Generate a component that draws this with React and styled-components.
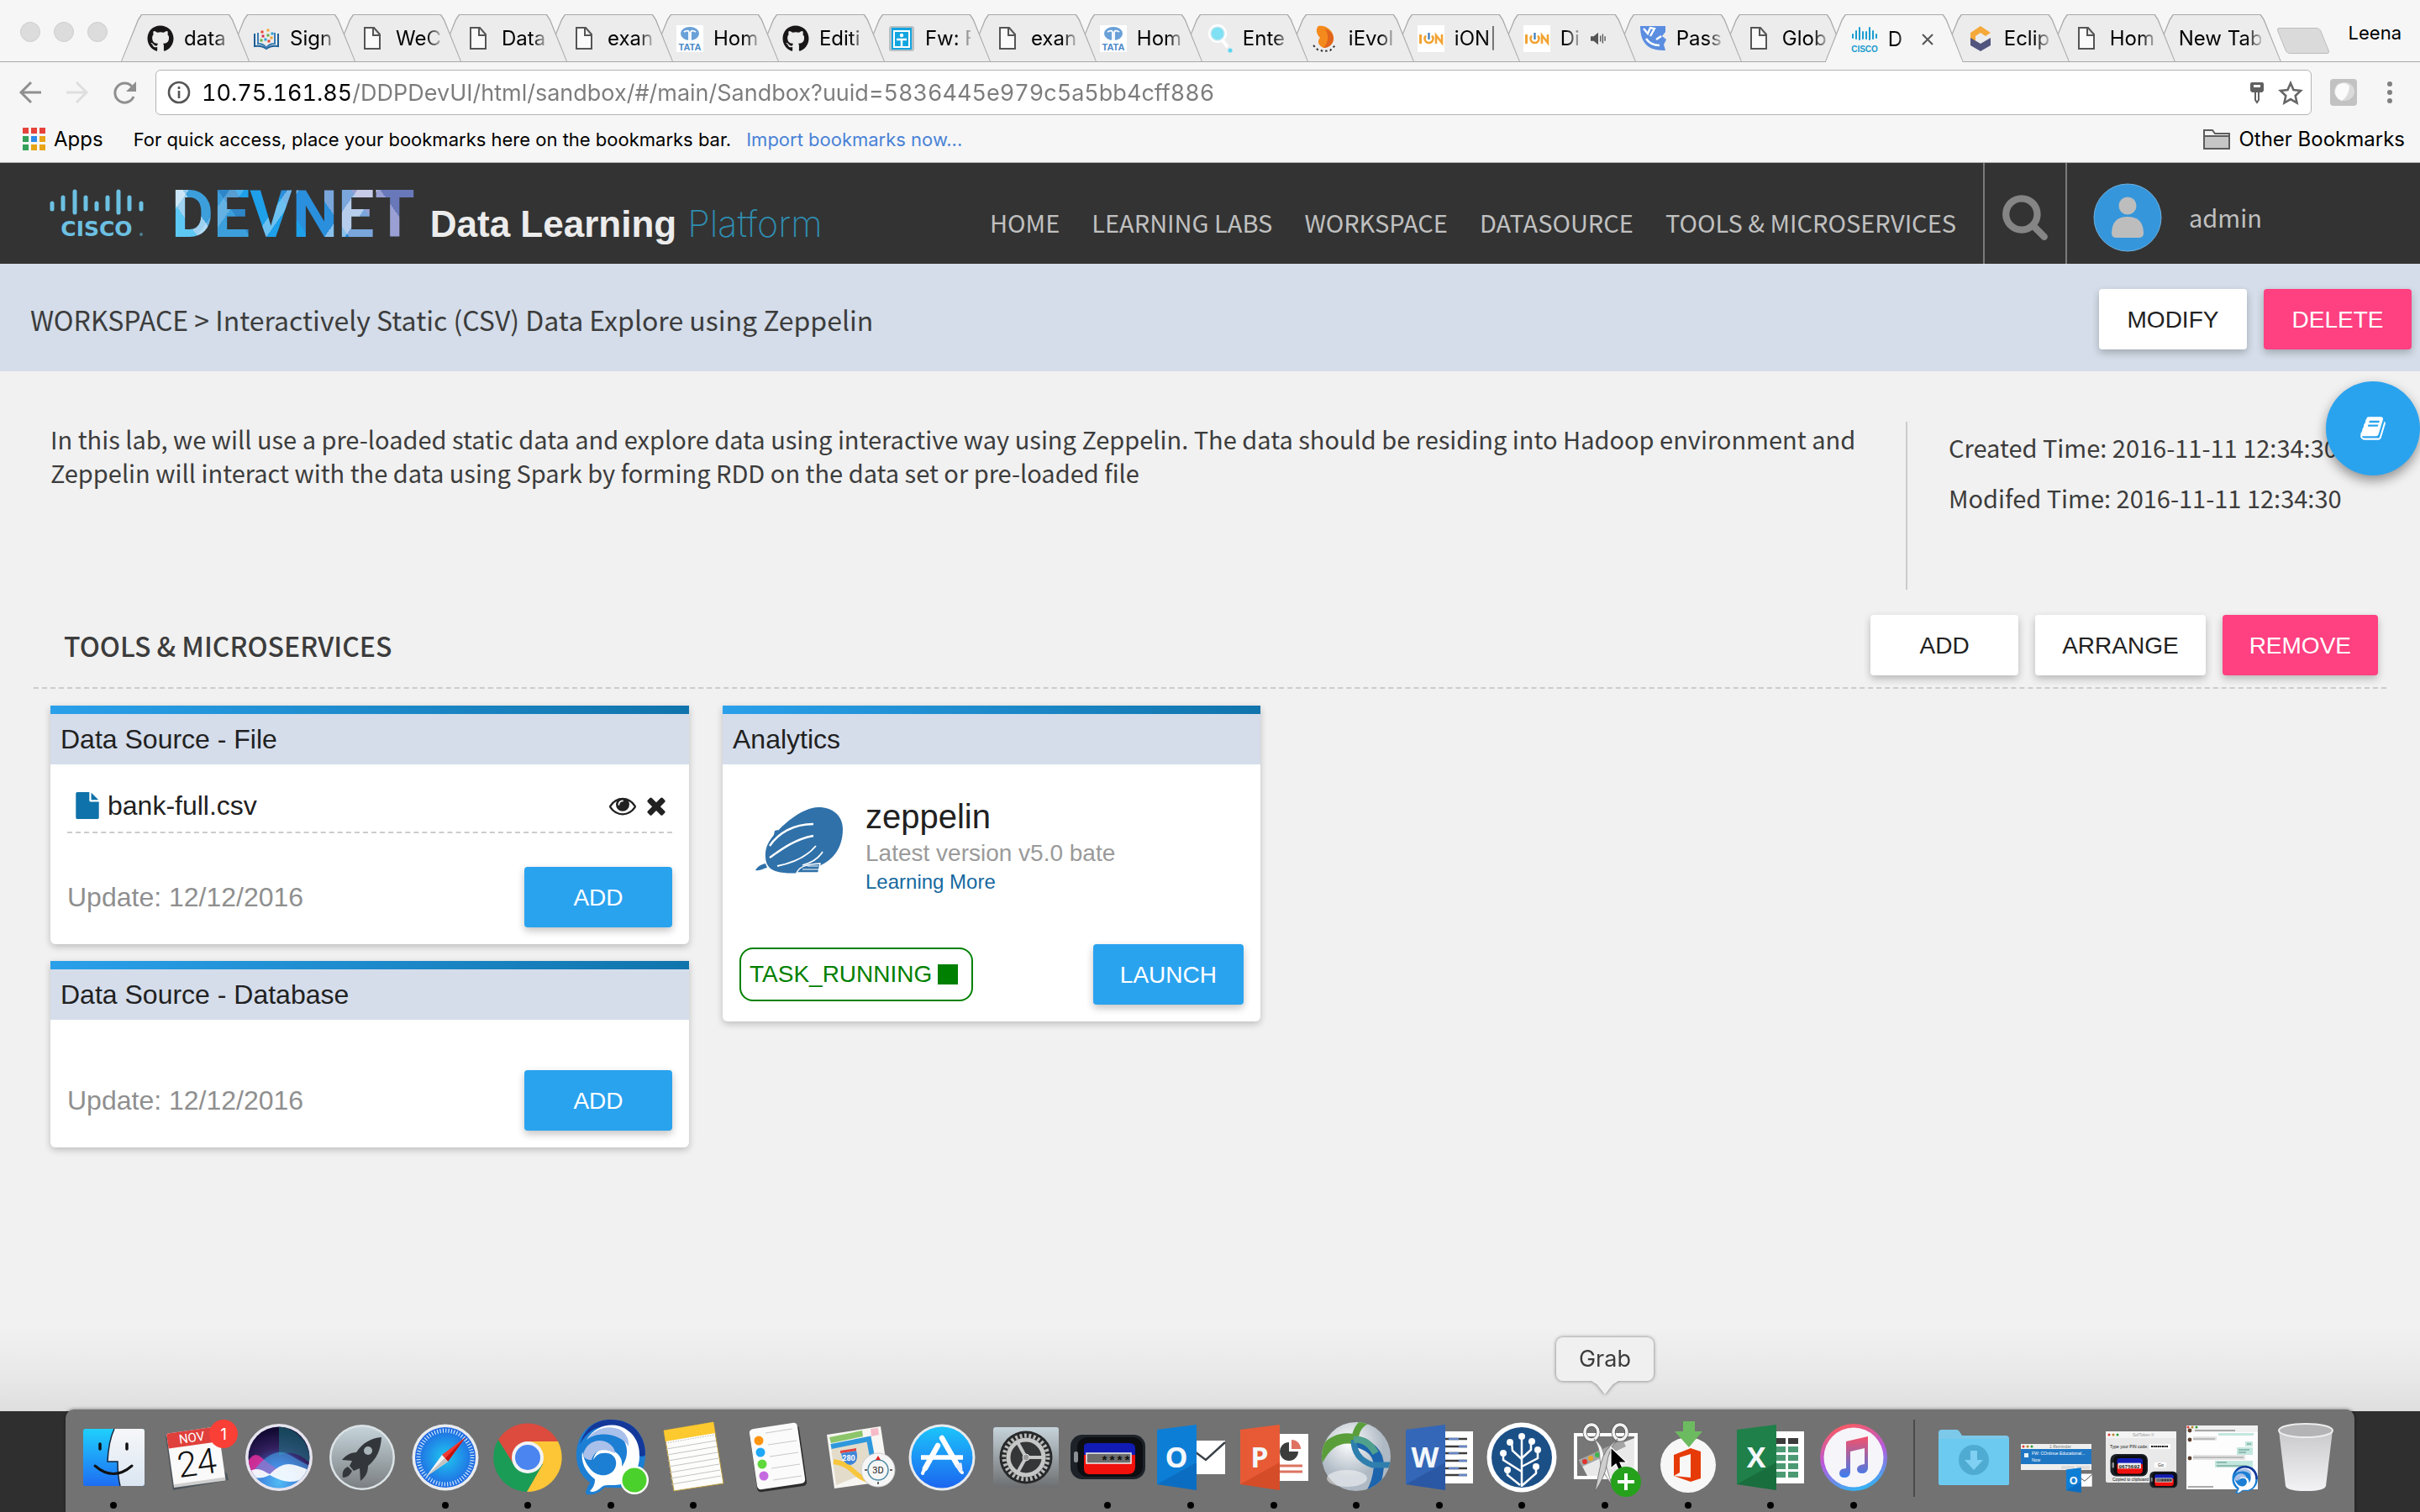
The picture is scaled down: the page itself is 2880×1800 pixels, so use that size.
import React from 'react';
import styled, { createGlobalStyle, css } from 'styled-components';
import { FaGithub } from 'react-icons/fa';

const SYSTEM = '"Inter", "Roboto", sans-serif';
const SOURCE = '"Noto Sans CJK SC", "Noto Sans", sans-serif';
const HELV = '"Liberation Sans", Arial, sans-serif';

const GlobalStyle = createGlobalStyle`
  *, *::before, *::after { box-sizing: border-box; }
  body { margin: 0; background: #2f2f2f; }
  button, input { font: inherit; margin: 0; padding: 0; border: 0; background: none; }
  button { cursor: pointer; color: inherit; }
  a { color: inherit; text-decoration: none; }
  h1, h2, h3, p, ul { margin: 0; padding: 0; font-weight: 400; list-style: none; }
  svg { display: block; flex: none; overflow: visible; }
`;

/* ---------- browser window ---------- */

const Screen = styled.div`
  min-height: 100vh;
  display: flex;
  flex-direction: column;
`;

const Chrome = styled.header`
  background: #f6f6f6;
  border-bottom: 1px solid #b0b0b0;
  font-family: ${SYSTEM};
  color: #000;
`;

const TabBar = styled.div`
  display: flex;
  height: 74px;
  padding: 17px 22px 0 24px;
  border-bottom: 1px solid #a9a9a9;
`;

const Lights = styled.div`
  display: flex;
  gap: 16px;
  width: 120px;
  padding-top: 9px;
`;

const Light = styled.button`
  width: 24px;
  height: 24px;
  border-radius: 50%;
  background: #dcdcdc;
  border: 1px solid #cecece;
`;

const Tabs = styled.nav`
  display: flex;
  flex: 1;
  min-width: 0;
`;

const tabShape = 'polygon(24px 0, calc(100% - 24px) 0, calc(100% - 20px) 6px, 100% 100%, 0 100%, 20px 6px)';

const Tab = styled.button`
  position: relative;
  z-index: ${p => (p.$active ? 40 : 30 - p.$index)};
  flex: 1 1 0;
  min-width: 0;
  display: flex;
  align-items: center;
  gap: 12px;
  padding: 2px ${p => (p.$trail ? '36px' : '24px')} 0 31px;
  margin-right: -27px;
  margin-bottom: ${p => (p.$active ? '-1px' : '0')};
  font-size: 24px;
  line-height: 32px;
  text-align: left;
  &:last-child { margin-right: 0; }
  &::before, &::after {
    content: '';
    position: absolute;
    inset: 0;
    z-index: -1;
    background: #a9a9a9;
    clip-path: ${tabShape};
  }
  &::after {
    inset: 1px 1px 0;
    background: ${p => (p.$active ? '#f6f6f6' : '#ececec')};
  }
`;

const TabTitle = styled.span`
  flex: 1;
  min-width: 0;
  overflow: hidden;
  white-space: nowrap;
  mask-image: linear-gradient(to right, #000 calc(100% - 18px), rgba(0, 0, 0, .2));
`;

const NewTab = styled.button`
  width: 52px;
  height: 31px;
  margin: 16px 28px 0 0;
  background: #dadada;
  border: 1px solid #bcbcbc;
  border-radius: 4px;
  transform: skewX(22deg);
`;

const Profile = styled.button`
  align-self: flex-start;
  padding-top: 6px;
  font-size: 22px;
  line-height: 32px;
`;

const Toolbar = styled.div`
  display: flex;
  align-items: center;
  gap: 22px;
  height: 72px;
  padding: 0 31px 0 22px;
`;

const NavIcons = styled.div`
  display: flex;
  gap: 28px;
  width: 141px;
`;

const Address = styled.label`
  flex: 1;
  display: flex;
  align-items: center;
  height: 54px;
  padding: 0 9px 0 13px;
  gap: 13px;
  background: #fff;
  border: 1px solid #b4b4b4;
  border-radius: 6px;
`;

const Url = styled.input`
  flex: 1;
  min-width: 0;
  height: 50px;
  outline: 0;
  font-size: 27px;
  font-variant-numeric: tabular-nums;
  color: transparent;
  background: linear-gradient(to right, #000 176px, #7c7c7c 176px);
  background-clip: text;
`;

const AddressIcons = styled.span`
  display: flex;
  align-items: center;
  gap: 16px;
`;

const ToolIcons = styled.div`
  display: flex;
  align-items: center;
  gap: 34px;
`;

const Bookmarks = styled.div`
  display: flex;
  align-items: center;
  height: 47px;
  padding: 0 18px 8px 27px;
  font-size: 22px;
  line-height: 28px;
`;

const Bookmark = styled.a`
  display: flex;
  align-items: center;
  gap: 10px;
  font-size: 24px;
  margin-left: ${p => (p.$end ? 'auto' : '0')};
`;

const BookmarkHint = styled.p`
  margin-left: 36px;
  a { margin-left: 18px; color: #4a82d6; }
`;

/* ---------- application header ---------- */

const AppHeader = styled.header`
  display: flex;
  height: 120px;
  background: #333;
  color: #c0c0c0;
  font-family: ${SOURCE};
  font-size: 29px;
  line-height: 40px;
`;

const Brand = styled.a`
  display: flex;
  align-items: baseline;
  padding: 22px 0 0 60px;
  white-space: nowrap;
  line-height: 80px;
`;

const DevNet = styled.span`
  margin: 0 18px 0 32px;
  font-family: Roboto, sans-serif;
  font-weight: 700;
  font-size: 77px;
  color: transparent;
  background:
    linear-gradient(125deg, rgba(255,255,255,.45) 0 8%, transparent 8% 22%, rgba(255,255,255,.2) 22% 27%, transparent 27% 42%, rgba(255,255,255,.35) 42% 46%, transparent 46% 66%, rgba(255,255,255,.45) 66% 73%, transparent 73%),
    linear-gradient(55deg, #5ec8f5 0 12%, #9fd2f0 12% 18%, #3c9fdc 18% 30%, #2e86c8 30% 36%, #1ea0ea 36% 50%, #2a8fdc 50% 64%, #7aa6dc 64% 76%, #9aa0d4 76% 86%, #6878b8 86%);
  background-clip: text;
`;

const BrandName = styled.span`
  font-family: ${HELV};
  font-weight: 700;
  font-size: 44px;
  color: #ececec;
`;

const BrandThin = styled.span`
  margin-left: 13px;
  font-family: Inter, sans-serif;
  font-weight: 200;
  font-size: 43px;
  color: #2f8db0;
`;

const MainNav = styled.nav`
  display: flex;
  gap: 38px;
  margin-left: auto;
  padding: 50px 32px 0 0;
`;

const SearchButton = styled.button`
  width: 100px;
  display: flex;
  justify-content: center;
  padding-top: 34px;
  border: solid #7b7b7b;
  border-width: 0 2px;
  color: #858585;
`;

const User = styled.a`
  display: flex;
  gap: 32px;
  width: 420px;
  padding: 24px 0 0 31px;
  span { padding-top: 20px; }
`;

/* ---------- workspace page ---------- */

const Main = styled.main`
  flex: 1;
  background: linear-gradient(to top, #dedede, #e8e8e8 40px, #f1f1f1 100px);
  color: #3c3c3c;
  font-family: ${SOURCE};
`;

const TitleBar = styled.div`
  display: flex;
  align-items: center;
  justify-content: space-between;
  padding: 30px 10px 26px 36px;
  background: #d4dde9;
  h1 { font-size: 32px; line-height: 44px; }
`;

const Actions = styled.div`
  display: flex;
  gap: 20px;
`;

const tones = {
  plain: css`background: #fff; color: #212121;`,
  pink: css`background: #ff4081; color: #fff;`,
  blue: css`background: #2aa3ef; color: #fff;`,
};

const Button = styled.button`
  min-width: 176px;
  height: 72px;
  padding: 1px 32px 0;
  border-radius: 4px;
  font-family: ${HELV};
  font-size: 28px;
  box-shadow: 0 4px 10px rgba(0, 0, 0, .24);
  ${p => tones[p.$tone || 'plain']}
`;

const Intro = styled.section`
  position: relative;
  display: flex;
  padding: 60px 0 0 60px;
`;

const Description = styled.p`
  flex: 1;
  padding-right: 40px;
  font-size: 29px;
  line-height: 40px;
`;

const Meta = styled.div`
  width: 612px;
  height: 200px;
  padding-left: 49px;
  border-left: 2px solid #ccc;
  font-size: 29px;
  line-height: 60px;
`;

const Fab = styled.button`
  position: absolute;
  top: 12px;
  right: 0;
  width: 112px;
  height: 112px;
  display: grid;
  place-items: center;
  border-radius: 50%;
  background: #2aa3ef;
  color: #fff;
  box-shadow: 0 6px 14px rgba(0, 0, 0, .4);
`;

const SectionHead = styled.div`
  display: flex;
  align-items: center;
  justify-content: space-between;
  margin: 0 40px;
  padding: 30px 10px 14px 36px;
  border-bottom: 2px dashed #ccc;
  h2 { font-size: 32px; line-height: 44px; font-weight: 500; }
`;

const Board = styled.section`
  display: grid;
  grid-template-columns: 19fr 16fr 32fr;
  gap: 40px;
  padding: 20px 60px;
  align-items: start;
  font-family: ${HELV};
`;

const Stack = styled.div`
  display: grid;
  gap: 20px;
`;

const Card = styled.article`
  border-radius: 0 0 6px 6px;
  background: #fff;
  box-shadow: 0 3px 8px rgba(0, 0, 0, .22);
  color: #212121;
  &::before {
    content: '';
    display: block;
    height: 10px;
    background: linear-gradient(to right, #2aa0ea, #1074ac);
  }
`;

const CardTitle = styled.h3`
  padding: 0 12px;
  background: #d5ddeb;
  font-size: 32px;
  line-height: 60px;
`;

const CardBody = styled.div`
  padding: 0 20px 20px;
`;

const FileRow = styled.div`
  display: flex;
  align-items: center;
  gap: 8px;
  height: 82px;
  padding: 18px 3px 0 8px;
  border-bottom: 2px dashed #ccc;
  font-size: 32px;
  a { flex: 1; }
`;

const IconButton = styled.button`
  width: 32px;
  height: 32px;
`;

const CardFoot = styled.div`
  display: flex;
  align-items: center;
  justify-content: space-between;
  margin-top: ${p => (p.$tight ? '40px' : '60px')};
`;

const Updated = styled.span`
  font-size: 32px;
  color: #8f8f8f;
`;

const Tool = styled.div`
  display: flex;
  gap: 26px;
  padding: 38px 0 0 19px;
  svg { margin-top: 13px; }
`;

const ToolName = styled.h3`
  font-size: 40px;
  line-height: 48px;
`;

const ToolVersion = styled.p`
  font-size: 28px;
  line-height: 40px;
  color: #9a9a9a;
`;

const ToolLink = styled.a`
  display: block;
  font-size: 24px;
  line-height: 28px;
  color: #16699f;
`;

const Status = styled.span`
  display: flex;
  align-items: center;
  gap: 7px;
  height: 64px;
  padding: 0 16px 0 10px;
  border: 2px solid #008000;
  border-radius: 16px;
  font-size: 28px;
  color: #008000;
  &::after {
    content: '';
    width: 24px;
    height: 24px;
    background: #008000;
  }
`;

/* ---------- dock ---------- */

const DockStrip = styled.footer`
  display: flex;
  align-items: flex-end;
  height: 120px;
  padding: 0 78px;
  background: #2f2f2f;
`;

const Dock = styled.div`
  flex: 1;
  display: flex;
  height: 122px;
  padding: 12px 9px 0 8px;
  border-radius: 10px 10px 0 0;
  background: #727272;
  box-shadow: 0 0 4px rgba(0, 0, 0, .5);
`;

const DockItem = styled.button`
  position: relative;
  flex: 1 1 0;
  min-width: 0;
  display: flex;
  flex-direction: column;
  align-items: center;
  gap: 8px;
  &::after {
    content: '';
    width: 8px;
    height: 8px;
    border-radius: 50%;
    background: ${p => (p.$running ? '#000' : 'transparent')};
  }
`;

const DockLine = styled.div`
  width: 45px;
  height: 92px;
  background: linear-gradient(#4a4a4a, #4a4a4a) center / 2px 100% no-repeat;
`;

const Tooltip = styled.span`
  position: absolute;
  bottom: 156px;
  left: 50%;
  width: 116px;
  margin-left: -58px;
  border-radius: 8px;
  background: #f0f0f0;
  font-family: ${SYSTEM};
  font-size: 27px;
  line-height: 52px;
  color: #3c3c3c;
  filter: drop-shadow(0 0 2px rgba(0, 0, 0, .5));
  &::after {
    content: '';
    position: absolute;
    top: 100%;
    left: 42px;
    width: 32px;
    height: 16px;
    background: #f0f0f0;
    clip-path: polygon(0 0, 100% 0, 80% 25%, 50% 100%, 20% 25%);
  }
`;

/* ---------- small drawings ---------- */

const FA = {
  eye: 'M1664 960q-152-236-381-353 61 104 61 225 0 185-131.5 316.5t-316.5 131.5-316.5-131.5-131.5-316.5q0-121 61-225-229 117-381 353 133 205 333.5 326.5t434.5 121.5 434.5-121.5 333.5-326.5zm-720-384q0-20-14-34t-34-14q-125 0-214.5 89.5t-89.5 214.5q0 20 14 34t34 14 34-14 14-34q0-86 61-147t147-61q20 0 34-14t14-34zm848 384q0 34-20 69-140 230-376.5 368.5t-499.5 138.5-499.5-139-376.5-368q-20-35-20-69t20-69q140-229 376.5-368t499.5-139 499.5 139 376.5 368q20 35 20 69z',
  times: 'M1490 1322q0 40-28 68l-136 136q-28 28-68 28t-68-28l-294-294-294 294q-28 28-68 28t-68-28l-136-136q-28-28-28-68t28-68l294-294-294-294q-28-28-28-68t28-68l136-136q28-28 68-28t68 28l294 294 294-294q28-28 68-28t68 28l136 136q28 28 28 68t-28 68l-294 294 294 294q28 28 28 68z',
  file: 'M1152 512v-472q22 14 36 28l408 408q14 14 28 36h-472zm-128 32q0 40 28 68t68 28h544v1056q0 40-28 68t-68 28h-1344q-40 0-68-28t-28-68v-1600q0-40 28-68t68-28h800v544z',
  book: 'M1703 478q40 57 18 129l-275 906q-19 64-76.5 107.5t-122.5 43.5h-923q-77 0-148.5-53.5t-99.5-131.5q-24-67-2-127 0-4 3-27t4-37q1-8-3-21.5t-3-19.5q2-11 8-21t16.5-23.5 16.5-23.5q23-38 45-91.5t30-91.5q3-10 .5-30t-.5-28q3-11 17-28t17-23q21-36 42-92t25-90q1-9-2.5-32t.5-28q4-13 22-30.5t22-22.5q19-26 42.5-84.5t27.5-96.5q1-8-3-25.5t-2-26.5q2-8 9-18t18-23 17-21q8-12 16.5-30.5t15-35 16-36 19.5-32 26.5-23.5 36-11.5 47.5 5.5l-1 3q38-9 51-9h761q74 0 114 56t18 130l-274 906q-36 119-71.5 153.5t-128.5 34.5h-869q-27 0-38 15-11 16-1 43 24 70 144 70h923q29 0 56-15.5t35-41.5l300-987q7-22 5-57 38 15 59 43zm-1064 2q-4 13 2 22.5t20 9.5h608q13 0 25.5-9.5t16.5-22.5l21-64q4-13-2-22.5t-20-9.5h-608q-13 0-25.5 9.5t-16.5 22.5zm-83 256q-4 13 2 22.5t20 9.5h608q13 0 25.5-9.5t16.5-22.5l21-64q4-13-2-22.5t-20-9.5h-608q-13 0-25.5 9.5t-16.5 22.5z',
  search: 'M1216 832q0-185-131.5-316.5t-316.5-131.5-316.5 131.5-131.5 316.5 131.5 316.5 316.5 131.5 316.5-131.5 131.5-316.5zm512 832q0 52-38 90t-90 38q-54 0-90-38l-343-342q-179 124-399 124-143 0-273.5-55.5t-225-150-150-225-55.5-273.5 55.5-273.5 150-225 225-150 273.5-55.5 273.5 55.5 225 150 150 225 55.5 273.5q0 220-124 399l343 343q37 37 37 90z',
};

const Fa = ({ name, size = 32, color = 'currentColor' }) => (
  <svg width={size} height={size} viewBox="0 0 1792 1792" fill={color} aria-hidden="true"><path d={FA[name]} /></svg>
);

const Fav = ({ children }) => <svg width="32" height="32" viewBox="0 0 32 32" aria-hidden="true">{children}</svg>;

const PageIcon = () => (
  <Fav><path d="M7 3h11l7 8v17H7zM17 3v9h8" fill="#fafafa" stroke="#555" strokeWidth="2" /></Fav>
);
const BookIcon = () => (
  <Fav>
    <path d="M2 10v15c6-1 10 0 14 3 4-3 8-4 14-3V10" fill="none" stroke="#1d5f96" strokeWidth="2" />
    <path d="M6 9v13c4 0 8 2 10 5 2-3 6-5 10-5V9" fill="none" stroke="#3b7db4" strokeWidth="2" />
    {[[11, 8, '#e8452c'], [18, 6, '#f2a53a'], [23, 10, '#2a9fd6'], [12, 13, '#d4304c'], [18, 12, '#63b045'], [22, 15, '#f0a030'], [15, 17, '#2a9fd6'], [19, 19, '#e8452c'], [10, 18, '#63b045']].map(([x, y, c]) => (
      <rect key={`${x}-${y}`} x={x - 1.5} y={y - 1.5} width="3" height="3" fill={c} />
    ))}
  </Fav>
);
const TataIcon = () => (
  <Fav>
    <rect width="32" height="32" fill="#fff" />
    <ellipse cx="16" cy="10" rx="11" ry="8" fill="#6aa0d8" />
    <path d="M15 18V9c0-3-3-3-6-1M17 18V9c0-3 3-3 6-1" fill="none" stroke="#fff" strokeWidth="1.800" />
    <text x="16" y="30" textAnchor="middle" fontFamily="Liberation Sans" fontWeight="700" fontSize="11" fill="#4a88c8">TATA</text>
  </Fav>
);
const BlueBoxIcon = () => (
  <Fav>
    <rect x="1" y="1" width="30" height="30" rx="3" fill="#b9c0c4" />
    <rect x="4" y="3" width="24" height="26" fill="#12a5e0" />
    <path d="M7 7h18v19H7z" fill="none" stroke="#fff" strokeWidth="2" />
    <circle cx="16" cy="12" r="2.200" fill="#fff" />
    <path d="M10 17h12M16 16v9" stroke="#fff" strokeWidth="2.400" />
  </Fav>
);
const LensIcon = () => (
  <Fav>
    <circle cx="14" cy="10" r="11" fill="#fff" />
    <circle cx="14" cy="10" r="8" fill="#7fe0f4" stroke="#c9e9f0" strokeWidth="1.500" />
    <path d="M19 17l7 9" stroke="#fff" strokeWidth="4" />
    <circle cx="29" cy="30" r="2.600" fill="#5fd6f0" />
  </Fav>
);
const FlameIcon = () => (
  <Fav>
    <path d="M8 1c8-2 18 5 18 14 0 7-5 12-12 12C8 24 6 19 10 15 6 11 4 5 8 1z" fill="#f58a1c" />
    <path d="M16 4c7 3 10 7 10 12 0 6-5 11-12 11 6-6 7-15 2-23z" fill="#e0641c" />
    <path d="M2 24l5 5 7 2 8-1 7-7" fill="none" stroke="#333" strokeWidth="2" strokeDasharray="2.500 3" />
  </Fav>
);
const IonIcon = () => (
  <Fav>
    <rect width="32" height="32" fill="#fff" />
    <path d="M3.500 11v11" stroke="#f2a434" strokeWidth="3" />
    <path d="M10 12.500a5 5 0 1 0 7 0" fill="none" stroke="#f2a434" strokeWidth="2.600" />
    <path d="M13.500 9v8" stroke="#3a7ab8" strokeWidth="2.200" />
    <path d="M22 22V12l7 9V11" fill="none" stroke="#f2a434" strokeWidth="2.600" />
  </Fav>
);
const PassIcon = () => (
  <Fav>
    <path d="M1 1h30v7l-4 5 5 4-3 6 2 7c-9 0-16-1-21-5C4 20 1 13 1 1z" fill="#5b8de0" />
    <path d="M5 4l5 6 3-7 5 1-5 9M8 16c4 6 9 8 16 8M20 17l6-4" fill="none" stroke="#fff" strokeWidth="2.400" />
  </Fav>
);
const CiscoIcon = () => (
  <Fav>
    {[[2, 10, 14], [6, 6, 15], [10, 2, 16], [14, 7, 15], [18, 7, 15], [22, 2, 16], [26, 6, 15], [30, 10, 14]].map(([x, a, b]) => (
      <path key={x} d={`M${x} ${a}V${b}`} stroke="#1a9cd0" strokeWidth="2" strokeLinecap="round" />
    ))}
    <text x="16" y="31" textAnchor="middle" fontFamily="Liberation Sans" fontWeight="700" fontSize="10" fill="#1a9cd0">CISCO</text>
  </Fav>
);
const HexIcon = () => (
  <Fav>
    <path d="M4 9l12-8 12 8-6 4-6-4-6 4v6l-6-2z" fill="#f5a93a" />
    <path d="M4 15l12 7 12-7v9l-12 7-12-7z" fill="#51557e" />
  </Fav>
);
const GitIcon = () => <FaGithub size={32} color="#181616" />;

const AudioIcon = () => (
  <svg width="18" height="18" viewBox="0 0 20 18" fill="#555"><path d="M0 6h4l6-5v16l-6-5H0z" /><path d="M13 5v8M16 3v12M19 6v6" stroke="#555" strokeWidth="1.500" /></svg>
);
const CloseIcon = () => (
  <svg width="14" height="14" viewBox="0 0 14 14"><path d="M1 1l12 12M13 1L1 13" stroke="#555" strokeWidth="2" /></svg>
);

const TABS = [
  ['data', GitIcon], ['Sign', BookIcon], ['WeC', PageIcon], ['Data', PageIcon], ['exan', PageIcon],
  ['Hom', TataIcon], ['Editi', GitIcon], ['Fw: F', BlueBoxIcon], ['exan', PageIcon], ['Hom', TataIcon],
  ['Ente', LensIcon], ['iEvol', FlameIcon], ['iON|', IonIcon], ['Di', IonIcon, 'audio'], ['Pass', PassIcon],
  ['Glob', PageIcon], ['D', CiscoIcon, 'active'], ['Eclip', HexIcon], ['Hom', PageIcon], ['New Tab', null],
];

const CiscoLogo = () => (
  <svg width="112" height="56" viewBox="0 0 112 56" role="img" aria-label="Cisco">
    {[[2, 16, 23], [15, 9, 23], [29, 2, 27], [42, 9, 23], [55, 16, 23], [68, 9, 23], [81, 2, 27], [94, 9, 23], [108, 16, 23]].map(([x, a, b]) => (
      <path key={x} d={`M${x} ${a}V${b}`} stroke="#6cc0e2" strokeWidth="5" strokeLinecap="round" />
    ))}
    <text x="55" y="55" textAnchor="middle" fontFamily="DejaVu Sans" fontWeight="700" fontSize="25" fill="#6cc0e2">CISCO</text>
    <circle cx="108" cy="53" r="2" fill="#4f7f92" />
  </svg>
);

const Zeppelin = () => (
  <svg width="105" height="80" viewBox="0 0 105 80" role="img" aria-label="Zeppelin">
    <g fill="#3071a9">
      <path d="M75 0C92 0 104 10 104 26c0 22-11 36-26 43L62 76c-10 3-20 3-28 2C22 77 13 73 12 60 11 48 16 39 25 30 36 18 55 1 75 0z" />
      <path d="M21 37l2-9 4-1 1 5zM0 75c3-5 7-7 12-8l2 5c-5 1-8 4-14 3z" />
      <path d="M49 78c4-8 12-10 28-11l-2 11z" stroke="#fff" strokeWidth="1.500" />
    </g>
    <g fill="none" stroke="#fff">
      <path d="M17 46c10-15 28-26 52-26M17 60c14-10 30-22 52-26" strokeWidth="2.400" />
      <path d="M26 70c20-4 36-12 46-24M56 69c12-3 19-8 24-16" strokeWidth="1.800" />
      <path d="M56 74h19M62 70h13" strokeWidth="1.200" />
    </g>
  </svg>
);

/* ---------- dock icons, each on a 90 x 90 field ---------- */

const Icon = ({ children, label }) => (
  <svg width="90" height="90" viewBox="0 0 90 90" role="img" aria-label={label}>{children}</svg>
);

const Lin = ({ id, a, b }) => (
  <linearGradient id={id} x1="0" y1="0" x2="0" y2="1"><stop stopColor={a} /><stop offset="1" stopColor={b} /></linearGradient>
);

const Finder = () => (
  <Icon label="Finder">
    <defs><Lin id="fn" a="#1fd0fd" b="#1e6df2" /><Lin id="fw" a="#f6f7f9" b="#dbe6f2" /></defs>
    <rect x="9" y="11" width="73" height="68" rx="3" fill="url(#fn)" />
    <path d="M46 11h33q3 0 3 3v62q0 3-3 3H53q-3-12-3-29H38q1-24 8-39z" fill="url(#fw)" />
    <path d="M46 11q-7 15-8 39h12q0 17 3 29" fill="none" stroke="#16263a" strokeWidth="1.500" />
    <path d="M29 29v6M61 29v6" stroke="#111" strokeWidth="3.500" strokeLinecap="round" />
    <path d="M23 55q22 19 44 0" fill="none" stroke="#111" strokeWidth="3" strokeLinecap="round" />
  </Icon>
);
const CalendarIcon = () => (
  <Icon label="Calendar">
    <path d="M8 19l9 65 66-12-2-8z" fill="#4c555c" />
    <g transform="rotate(-8 45 42)">
      <rect x="13" y="12" width="62" height="64" rx="2" fill="#fafafa" />
      <path d="M13 14q0-2 2-2h58q2 0 2 2v16H13z" fill="#e0403c" />
      <path d="M13 73h62v4H13z" fill="#cfcfcf" />
      <text x="42" y="26" textAnchor="middle" fontFamily="Roboto" fontSize="15" fill="#fff">NOV</text>
      <text x="44" y="66" textAnchor="middle" fontFamily="Roboto" fontWeight="300" fontSize="42" fill="#111">24</text>
    </g>
    <circle cx="77" cy="17" r="17" fill="#f93f36" />
    <text x="77" y="24" textAnchor="middle" fontFamily="Inter" fontSize="19" fill="#fff">1</text>
  </Icon>
);
const Siri = () => (
  <Icon label="Siri">
    <defs>
      <radialGradient id="si" cx=".5" cy=".9" r=".85"><stop stopColor="#5ad4f8" /><stop offset=".3" stopColor="#3d6fd6" /><stop offset=".65" stopColor="#33205f" /><stop offset="1" stopColor="#120a34" /></radialGradient>
      <clipPath id="sc"><circle cx="45" cy="45" r="36.500" /></clipPath>
    </defs>
    <circle cx="45" cy="45" r="40" fill="#e6e4ee" />
    <circle cx="45" cy="45" r="36.500" fill="url(#si)" />
    <g clipPath="url(#sc)">
      <path d="M45 8q35 5 38 45-20-20-38-10z" fill="#1c8f8c" opacity=".45" />
      <path d="M6 54q8-18 18-9t22 15q-18 10-38 4z" fill="#f02fa0" opacity=".8" />
      <path d="M14 62q24-32 44-20t26 14v30H14z" fill="#48a9f0" opacity=".55" />
      <path d="M8 63q10-8 22 0l4 2q12-12 22-12t28 9q-12 12-26 12-12-1-24-8-14 7-26 0z" fill="#fff" opacity=".9" />
    </g>
  </Icon>
);
const Launchpad = () => (
  <Icon label="Launchpad">
    <defs><Lin id="lp" a="#c5d4da" b="#7b7f82" /></defs>
    <circle cx="45" cy="45" r="39" fill="#dbe3e6" />
    <circle cx="45" cy="45" r="36.500" fill="url(#lp)" />
    <path d="M68 21c-12 1-22 6-30 18-7 0-13 4-17 9l12 1-3 6 5 6 7-3 1 15c6-5 9-10 9-18 10-8 15-18 16-34z" fill="#33373b" />
    <path d="M28 56c-6 3-7 7-6 13 5 0 9-3 11-8z" fill="#33373b" />
    <circle cx="52" cy="37" r="5" fill="#aab5ba" />
  </Icon>
);
const Safari = () => (
  <Icon label="Safari">
    <defs><radialGradient id="sf"><stop stopColor="#1fc8f0" /><stop offset="1" stopColor="#2066e2" /></radialGradient></defs>
    <circle cx="45" cy="45" r="39.500" fill="#e9ecef" />
    <circle cx="45" cy="45" r="36" fill="url(#sf)" />
    <circle cx="45" cy="45" r="32" fill="none" stroke="#d6f0fb" strokeWidth="5" strokeDasharray="1.100 2.250" />
    <path d="M69 21L48 50l-7-8z" fill="#f03a32" />
    <path d="M69 21L48 50l-3-4z" fill="#c4120f" />
    <path d="M22 68l19-26 7 8z" fill="#f4f4f4" />
    <path d="M22 68l26-18-4-4z" fill="#c2c2c2" />
  </Icon>
);
const ChromeIcon = () => (
  <Icon label="Google Chrome">
    <path d="M45 45L10 24A41 41 0 0 0 44 86l19-33z" fill="#1a9c57" />
    <path d="M45 45l18 8-19 33A41 41 0 0 0 81 26H45z" fill="#fdc636" />
    <path d="M45 26h36A41 41 0 0 0 10 24l18 29z" fill="#dc4b3e" />
    <circle cx="45" cy="45" r="19" fill="#f3f3f3" />
    <circle cx="45" cy="45" r="15" fill="#4a85f0" />
  </Icon>
);
const JabberArt = () => (
  <g>
    <path d="M45 0c26 0 41 18 41 42 0 20-12 36-29 39-9 1-15-1-20 0-8 8-14 9-21 8-3-3 2-9 4-14C8 66 4 54 4 42 4 18 20 0 45 0z" fill="#1c7fd4" />
    <path d="M45 0c26 0 41 18 41 42q-4 4-8 0C76 20 62 8 40 8 24 8 14 18 8 30 14 10 26 0 45 0z" fill="#14389a" />
    <path d="M56 8c16 6 24 20 23 37-1 20-14 33-30 33-8 0-13-1-17 4-5 4-10 5-12 3 4-4 6-8 6-14C14 62 9 50 11 38c4 20 16 30 28 28 16-3 16-24 2-26-10-1-13 2-17 8 4-24 38-12 34 8 12-16 6-38-14-42-14-2-22 4-28 10C26 8 42 4 56 8z" fill="#fff" />
    <path d="M16 24C26 10 42 6 56 12c8 5 11 12 10 20-8-14-34-20-50-8z" fill="#a9c0ea" />
    <path d="M12 42c2-12 14-20 26-16 8 3 12 9 12 14-12-6-24-6-28 8-5 0-9-2-10-6z" fill="#a9c0ea" />
  </g>
);
const Jabber = () => (
  <Icon label="Jabber"><JabberArt /><circle cx="73" cy="72" r="17" fill="#fff" /><circle cx="73" cy="72" r="14.500" fill="#4bd12b" /></Icon>
);
const Notes = () => (
  <Icon label="Notes">
    <path d="M10 13L69 3l12 73-59 9z" fill="#fdfdfb" stroke="#b99a3a" strokeWidth="1" />
    <path d="M10 13L69 3l2 13-59 10z" fill="#fcc92f" />
    <path d="M12 28l59-10" stroke="#999" strokeDasharray="1 2" />
    {[36, 43, 50, 57, 64, 71, 78].map((y, i) => <path key={y} d={`M${13 + i} ${y - 1}l59-10`} stroke="#c4c4c4" />)}
  </Icon>
);
const Reminders = () => (
  <Icon label="Reminders">
    <path d="M18 14L66 7q5-1 6 4l9 62q1 5-4 6l-49 7q-5 1-6-4L13 18z" fill="#2d2d2d" />
    <path d="M18 11L64 4q5-1 6 4l9 62q1 5-4 6l-47 7q-5 1-6-4L13 17q-1-5 5-6z" fill="#fbfbfb" />
    {['#ff9411', '#1ea8f7', '#5fd83c', '#c46be0'].map((c, i) => (
      <g key={c}><circle cx={24 + 2 * i} cy={25 + 14 * i} r="5.500" fill={c} /><path d={`M${35 + 2 * i} ${30 + 14 * i}l34-5`} stroke="#c9c9c9" /></g>
    ))}
    <path d="M32 16l32-5" stroke="#c9c9c9" />
  </Icon>
);
const Maps = () => (
  <Icon label="Maps">
    <path d="M6 18L70 8l10 65-65 9z" fill="#f7f6f2" />
    <path d="M9 21l39-8 1 7-38 8z" fill="#8cc56a" />
    <path d="M58 11l9-1 1 8-9 2z" fill="#f5bcc8" />
    <path d="M11 34l47-9 6 34-47 19z" fill="#e4dccb" />
    <path d="M11 32l45-9 6 32" fill="none" stroke="#2f98dc" strokeWidth="6" />
    <path d="M14 50q14 2 22 10t18 12" fill="none" stroke="#f8c63c" strokeWidth="6" />
    <path d="M23 40l18-3q4 14-7 17-9-1-11-14z" fill="#3f86d8" />
    <path d="M22 40l19-3v-3l-19 3z" fill="#e0433f" />
    <text x="32" y="49" textAnchor="middle" fontFamily="Roboto" fontWeight="700" fontSize="9" fill="#fff">280</text>
    <circle cx="67" cy="60" r="20" fill="#f6f6f6" stroke="#cfcfcf" />
    <circle cx="67" cy="60" r="12" fill="none" stroke="#4d8ba6" strokeWidth="1.500" />
    <text x="67" y="64" textAnchor="middle" fontFamily="Roboto" fontSize="11" fill="#222">3D</text>
    <path d="M67 43l3 5h-6z" fill="#e02020" />
    <path d="M51 60h3M81 60h3M67 74v3" stroke="#333" strokeWidth="1.500" />
  </Icon>
);
const AppStore = () => (
  <Icon label="App Store">
    <defs><Lin id="as" a="#1cc4fb" b="#1c66f0" /></defs>
    <circle cx="45" cy="45" r="39.500" fill="#e8ebee" />
    <circle cx="45" cy="45" r="36.500" fill="url(#as)" />
    <g stroke="#fff" strokeLinecap="round" fill="none">
      <path d="M20 45h50" strokeWidth="5.500" strokeLinecap="butt" />
      <path d="M40 31L25 58M45 22l19 33" strokeWidth="6.500" />
      <path d="M24 59l-2 5M64 54q1 6 5 9" strokeWidth="4" />
    </g>
    <path d="M61 54l7-3q2 7 1 12-6-2-8-9z" fill="#e8eefc" />
  </Icon>
);
const Preferences = () => (
  <Icon label="System Preferences">
    <defs><Lin id="sp" a="#c6d3da" b="#6d6f71" /></defs>
    <rect x="7" y="9" width="78" height="72" rx="3" fill="url(#sp)" />
    <circle cx="46" cy="45" r="31.500" fill="#26282a" />
    <circle cx="46" cy="45" r="26" fill="none" stroke="#b9b9b9" strokeWidth="5" strokeDasharray="2.900 2.540" />
    <circle cx="46" cy="45" r="21" fill="#343638" stroke="#c6c6c6" strokeWidth="5" />
    <path d="M46 45h20M46 45L36 27M46 45L36 63" stroke="#c6c6c6" strokeWidth="4" />
    <circle cx="46" cy="45" r="4" fill="#9a9a9a" stroke="#ddd" />
  </Icon>
);
const TokenArt = ({ code }) => (
  <g>
    <rect x="1" y="18" width="89" height="53" rx="14" fill="#1c2228" />
    <rect x="9" y="21" width="78" height="47" rx="12" fill="#0c0e12" />
    <rect x="5" y="38" width="5" height="13" rx="2" fill="#8a8f94" />
    <path d="M17 42V32q0-4 6-4h48q7 0 7 6v8z" fill="#121cb4" />
    <path d="M17 42v16q0 7 6 7h46q9 0 9-9V42z" fill="#f0100c" />
    <rect x="20" y="40" width="53" height="12" fill={code ? '#eee' : '#6c6c6c'} stroke="#eee" strokeWidth="1.500" />
    <text x={code ? 46 : 55} y={code ? 51 : 54} textAnchor="middle" fontFamily="Liberation Mono" fontWeight="700" fontSize={code ? 12 : 15} fill="#111">{code || '****'}</text>
  </g>
);
const Token = () => <Icon label="SofToken"><TokenArt /></Icon>;

const Door = ({ color, dark, letter }) => (
  <g>
    <path d="M5 12L52 6v78L5 77z" fill={color} />
    <path d="M5 77l47-26v33z" fill={dark} opacity=".5" />
    <text x="28" y="57" textAnchor="middle" fontFamily="Open Sans" fontWeight="700" fontSize="34" fill="#f3f7fb">{letter}</text>
  </g>
);
const OutlookArt = () => (
  <g>
    <rect x="51" y="25" width="35" height="40" fill="#fff" />
    <path d="M51 39l12 9 23-21" fill="none" stroke="#3b4148" strokeWidth="2.500" />
    <Door color="#0d7ed6" dark="#0a5cab" letter="O" />
  </g>
);
const Outlook = () => <Icon label="Outlook"><OutlookArt /></Icon>;
const PowerPoint = () => (
  <Icon label="PowerPoint">
    <rect x="50" y="17" width="36" height="56" fill="#fff" />
    <path d="M63 27v11h11a11 11 0 1 1-11-11z" fill="#3c3c3c" />
    <path d="M66 24a11 11 0 0 1 11 11H66z" fill="#dd7360" />
    <path d="M52 55h27M52 62h27" stroke="#dd7360" strokeWidth="3" />
    <Door color="#e75a35" dark="#c43d1c" letter="P" />
  </Icon>
);
const AnyConnect = () => (
  <Icon label="AnyConnect">
    <defs><radialGradient id="ac" cx=".4" cy=".3"><stop stopColor="#fff" /><stop offset="1" stopColor="#aeb9c4" /></radialGradient><clipPath id="acc"><circle cx="45" cy="44" r="41" /></clipPath></defs>
    <circle cx="45" cy="44" r="41" fill="url(#ac)" />
    <g clipPath="url(#acc)" fill="none">
      <path d="M60 0Q46 6 44 20" stroke="#5a9e3a" strokeWidth="8" />
      <path d="M0 48Q16 16 46 24" stroke="#5a9e3a" strokeWidth="12" />
      <path d="M42 26q30 6 30 30-2 20-10 32" stroke="#1c64ac" strokeWidth="12" />
      <path d="M42 24q0 22 22 30h26" stroke="#2f7fae" strokeWidth="7" />
      <path d="M42 24q16-2 26 16" stroke="#4fa08c" strokeWidth="8" />
    </g>
    <ellipse cx="34" cy="70" rx="24" ry="10" fill="#fff" opacity=".5" />
  </Icon>
);
const Word = () => (
  <Icon label="Word">
    <rect x="50" y="14" width="35" height="62" fill="#fff" />
    {[23, 32, 40, 49, 58, 66].map((y, i) => (
      <g key={y} strokeWidth="2.500"><path d={`M52 ${y}h26`} stroke="#3c3c3c" /><path d={i % 2 ? `M68 ${y}h10` : `M56 ${y}h12`} stroke="#6585c6" /></g>
    ))}
    <Door color="#3467b8" dark="#214a92" letter="W" />
  </Icon>
);
const SourceTree = () => (
  <Icon label="SourceTree">
    <circle cx="45" cy="45" r="41.500" fill="#fff" />
    <circle cx="45" cy="45" r="36" fill="#1b5087" />
    <g fill="none" stroke="#fff" strokeWidth="2.500">
      <path d="M45 20v60M33 27l1 10 11 10M56 26v10L45 46M23 40v8l22 14M64 36v10L45 56M28 60v6l15 12M62 56v8L46 78" />
    </g>
    {[[45, 20], [31, 27], [57, 26], [23, 40], [64, 36], [28, 60], [62, 56]].map(([x, y]) => <circle key={x} cx={x} cy={y} r="4" fill="#fff" />)}
  </Icon>
);
const Grab = () => (
  <Icon label="Grab">
    <rect x="8" y="16" width="76" height="55" fill="#fff" />
    <rect x="12" y="20" width="68" height="47" fill="#777" />
    <path d="M80 22v45H24L14 48z" fill="#e9e9e9" />
    <path d="M14 48L66 24l4 8-52 24z" fill="#a4a4a4" />
    <circle cx="21" cy="50" r="3" fill="#e0342c" /><circle cx="28" cy="46" r="3" fill="#e8a52a" /><circle cx="36" cy="42" r="3" fill="#3fb54a" />
    <g fill="none" stroke="#555" strokeWidth="5"><ellipse cx="29" cy="15" rx="8" ry="9" /><ellipse cx="63" cy="15" rx="8" ry="9" /></g>
    <g fill="none" stroke="#f2f2f2" strokeWidth="3.500"><ellipse cx="29" cy="15" rx="8" ry="9" /><ellipse cx="63" cy="15" rx="8" ry="9" /></g>
    <path d="M32 23q12 8 12 24l9 30q-14-18-14-30 0-14-7-24z" fill="#f4f4f4" stroke="#777" strokeWidth=".8" />
    <path d="M60 23q-16 12-20 30l-7 33q12-18 14-32 2-18 13-31z" fill="#cfcfcf" stroke="#666" strokeWidth=".8" />
    <path d="M52 33v25l6-5 5 11 5-2-5-11h8z" fill="#000" stroke="#fff" strokeWidth="1.200" />
    <circle cx="70" cy="74" r="18" fill="#25a11c" />
    <path d="M70 64v20M60 74h20" stroke="#fff" strokeWidth="4" />
  </Icon>
);
const OfficeInstaller = () => (
  <Icon label="Microsoft Office">
    <circle cx="45" cy="54" r="33" fill="#f7f7f7" />
    <path d="M28 42l20-8 12 4v32l-12 4-20-7 20 2V41l-13 4v18l-7 4z" fill="#e63b08" />
    <path d="M39 2h14v12h9L46 33 29 14h10z" fill="#6dbb60" />
  </Icon>
);
const Excel = () => (
  <Icon label="Excel">
    <rect x="50" y="14" width="35" height="62" fill="#fff" />
    <path d="M52 22h11v7H52zM66 22h12v7H66z" fill="#3c3c3c" />
    {[32, 42, 52, 62].map(y => <path key={y} d={`M52 ${y}h11v7H52zM66 ${y}h12v7H66z`} fill="#4c9a73" />)}
    <Door color="#1f8049" dark="#145c32" letter="X" />
  </Icon>
);
const ITunes = () => (
  <Icon label="iTunes">
    <defs>
      <linearGradient id="it" x1=".3" y1="0" x2=".6" y2="1"><stop stopColor="#fb5b5c" /><stop offset=".5" stopColor="#b65be0" /><stop offset="1" stopColor="#2fb5f4" /></linearGradient>
      <Lin id="im" a="#f5506a" b="#3b7df0" />
    </defs>
    <circle cx="45" cy="45" r="40" fill="url(#it)" />
    <circle cx="45" cy="45" r="35.500" fill="#f6f5fa" />
    <path d="M36 26l26-6v38q-1 6-7 6t-6-5q0-5 9-6V34l-17 4v25q-1 6-7 6t-6-5q0-6 8-6z" fill="url(#im)" />
  </Icon>
);
const Downloads = () => (
  <Icon label="Downloads">
    <path d="M3 16q0-4 4-4h17q3 0 5 4l2 3h52q4 0 4 4v53q0 2-3 2H6q-3 0-3-3z" fill="#7cc9ea" />
    <path d="M3 23h84v52q0 3-3 3H6q-3 0-3-3z" fill="#6ccaf0" />
    <circle cx="45" cy="48" r="18" fill="#4fabd2" />
    <path d="M41 37h8v11h7L45 60 34 48h7z" fill="#7fd0f2" />
  </Icon>
);
const WinDots = ({ x, y }) => (
  <g><circle cx={x} cy={y} r="1.500" fill="#e23b32" /><circle cx={x + 5} cy={y} r="1.500" fill="#b8862a" /><circle cx={x + 10} cy={y} r="1.500" fill="#2f9e3a" /></g>
);
const tiny = { fontFamily: 'Liberation Sans', fontSize: 5 };
const ReminderWindow = () => (
  <Icon label="Reminder window">
    <rect x="2" y="29" width="84" height="31" fill="#efefef" />
    <rect x="2" y="35" width="84" height="18" fill="#1f77c4" />
    <WinDots x={5} y={32} />
    <text {...tiny} x="36" y="34" fill="#777">1 Reminder</text>
    <rect x="6" y="40" width="5" height="5" fill="#e8f1fa" />
    <text {...tiny} x="15" y="42" fill="#fff">FW: COntinue Educational...</text>
    <text {...tiny} x="15" y="50" fill="#fff">Now</text>
    <path d="M50 55h16v4H50zM68 55h16v4H68z" fill="#ddd" />
    <g transform="translate(54 55) scale(.38)"><OutlookArt /></g>
  </Icon>
);
const TokenWindow = () => (
  <Icon label="SofToken window">
    <rect x="4" y="14" width="84" height="61" rx="2" fill="#e9e9e9" />
    <rect x="4" y="14" width="84" height="8" fill="#f4f4f4" />
    <WinDots x={8} y={18} />
    <text {...tiny} x="36" y="20" fill="#999">SofToken II</text>
    <text {...tiny} x="9" y="34" fill="#111">Type your PIN code:</text>
    <rect x="56" y="29" width="25" height="6" fill="#fff" />
    <path d="M58 32h20" stroke="#111" strokeWidth="2" strokeDasharray="2 .6" />
    <g transform="translate(9 32) scale(.5)"><TokenArt code="0675692" /></g>
    <rect x="62" y="51" width="14" height="6" fill="#fff" />
    <text {...tiny} x="66" y="56" fill="#111">Go</text>
    <text {...tiny} x="12" y="73" fill="#111">Copied to clipboard</text>
    <g transform="translate(56 55) scale(.37)"><TokenArt /></g>
  </Icon>
);
const ChatWindow = () => (
  <Icon label="Chat window">
    <rect x="2" y="7" width="85" height="76" fill="#fdfdfd" />
    <rect x="2" y="7" width="85" height="8" fill="#f0f0f0" />
    <WinDots x={4} y={9} />
    {[[6, 13], [6, 24], [6, 46]].map(([x, y]) => <circle key={y} cx={x} cy={y} r="2.400" fill="#5b3d2c" />)}
    <path d="M12 13h48M10 23h26M10 45h60M4 80h30" stroke="#8f8f8f" strokeWidth="1.500" />
    <path d="M10 20h28v5H10zM10 42h62v6H10z" fill="#ccc" opacity=".5" />
    <path d="M40 16h42v3H40zM72 26h9v6h-9zM62 33h19v9H62zM36 49h45v8H36z" fill="#c3e7de" />
    <path d="M38 51h12M38 55h36M64 36h13M64 39h9M74 29h5" stroke="#5c8f84" strokeWidth="1.200" />
    <g transform="translate(55 55) scale(.37)"><JabberArt /></g>
  </Icon>
);
const Trash = () => (
  <Icon label="Trash">
    <defs><Lin id="tr" a="#c9c9cb" b="#f3f3f5" /></defs>
    <path d="M13 13l8 66q2 6 24 6t24-6l8-66z" fill="url(#tr)" />
    <ellipse cx="45" cy="13" rx="32" ry="8" fill="#b4b4b6" stroke="#ededed" strokeWidth="2" />
  </Icon>
);

const APPS = [
  [Finder, 1], [CalendarIcon, 0], [Siri, 0], [Launchpad, 0], [Safari, 1], [ChromeIcon, 1], [Jabber, 1], [Notes, 1],
  [Reminders, 0], [Maps, 0], [AppStore, 0], [Preferences, 0], [Token, 1], [Outlook, 1], [PowerPoint, 1], [AnyConnect, 1],
  [Word, 1], [SourceTree, 1], [Grab, 1, 'Grab'], [OfficeInstaller, 1], [Excel, 1], [ITunes, 1],
];
const WINDOWS = [Downloads, ReminderWindow, TokenWindow, ChatWindow, Trash];

/* ---------- sections ---------- */

const BrowserChrome = () => (
  <Chrome>
    <TabBar>
      <Lights><Light aria-label="Close" /><Light aria-label="Minimise" /><Light aria-label="Zoom" /></Lights>
      <Tabs>
        {TABS.map(([title, Glyph, state], i) => (
          <Tab key={i} $index={i} $active={state === 'active'} $trail={!!state}>
            {Glyph && <Glyph />}
            <TabTitle>{title}</TabTitle>
            {state === 'audio' && <AudioIcon />}
            {state === 'active' && <CloseIcon />}
          </Tab>
        ))}
      </Tabs>
      <NewTab aria-label="New tab" />
      <Profile>Leena</Profile>
    </TabBar>
    <Toolbar>
      <NavIcons>
        <button aria-label="Back"><svg width="28" height="28" viewBox="0 0 28 28"><path d="M15 2L3 14l12 12M3 14h24" fill="none" stroke="#8f8f8f" strokeWidth="3" /></svg></button>
        <button aria-label="Forward"><svg width="28" height="28" viewBox="0 0 28 28"><path d="M13 2l12 12-12 12M1 14h24" fill="none" stroke="#dedede" strokeWidth="3" /></svg></button>
        <button aria-label="Reload"><svg width="28" height="28" viewBox="0 0 28 28"><path d="M25 19a11.500 11.500 0 1 1-2-12" fill="none" stroke="#8f8f8f" strokeWidth="3" /><path d="M28 1v12H16z" fill="#8f8f8f" /></svg></button>
      </NavIcons>
      <Address>
        <svg width="28" height="28" viewBox="0 0 28 28" fill="none" stroke="#555" strokeWidth="2.600"><circle cx="14" cy="14" r="12" /><path d="M14 12v9M14 7v3" /></svg>
        <Url aria-label="Address" defaultValue="10.75.161.85/DDPDevUI/html/sandbox/#/main/Sandbox?uuid=5836445e979c5a5bb4cff886" />
        <AddressIcons>
          <svg width="18" height="26" viewBox="0 0 18 26"><path d="M1 3q0-2 2-2h12q2 0 2 2v8l-2 2H3l-2-2zM5 4v3h8V4z" fill="#606060" fillRule="evenodd" /><path d="M7 12v10l2 3 2-3V12" fill="none" stroke="#606060" strokeWidth="2" /></svg>
          <svg width="30" height="28" viewBox="0 0 30 28"><path d="M15 3l3.500 8 8.500 1-6.300 6 1.800 8.500-7.500-4.400-7.500 4.400L9.300 18 3 12l8.500-1z" fill="none" stroke="#666" strokeWidth="2.600" /></svg>
        </AddressIcons>
      </Address>
      <ToolIcons>
        <button aria-label="Extension"><svg width="32" height="32" viewBox="0 0 32 32"><rect width="32" height="32" rx="4" fill="#c2c2c2" /><ellipse cx="17" cy="15" rx="12" ry="11" fill="#dadada" /><path d="M9 7q10-5 14 2-1 12-9 17-6-2-8-9 0-6 3-10z" fill="#fbfbfb" /></svg></button>
        <button aria-label="Menu"><svg width="10" height="28" viewBox="0 0 10 28" fill="#808080"><circle cx="5" cy="4" r="3" /><circle cx="5" cy="14" r="3" /><circle cx="5" cy="24" r="3" /></svg></button>
      </ToolIcons>
    </Toolbar>
    <Bookmarks>
      <Bookmark href="#apps">
        <svg width="27" height="27" viewBox="0 0 27 27">
          {['#e5433b', '#e5433b', '#e5433b', '#34a05a', '#2d8bea', '#e8a417', '#34a05a', '#e8a417', '#e8a417'].map((c, i) => (
            <rect key={i} x={(i % 3) * 10} y={Math.floor(i / 3) * 10} width="7" height="7" fill={c} />
          ))}
        </svg>
        Apps
      </Bookmark>
      <BookmarkHint>For quick access, place your bookmarks here on the bookmarks bar.<a href="#import">Import bookmarks now...</a></BookmarkHint>
      <Bookmark $end href="#other">
        <svg width="32" height="26" viewBox="0 0 32 26"><path d="M1 24V2h10l3 4h17v18z" fill="#f2f2f2" stroke="#5c5c5c" strokeWidth="2" /><path d="M2 9h28v14H2z" fill="#c6c6c6" /><path d="M1 9h30" stroke="#5c5c5c" strokeWidth="2" /></svg>
        Other Bookmarks
      </Bookmark>
    </Bookmarks>
  </Chrome>
);

const Header = () => (
  <AppHeader>
    <Brand href="#home">
      <CiscoLogo />
      <DevNet>DEVNET</DevNet>
      <BrandName>Data Learning</BrandName>
      <BrandThin>Platform</BrandThin>
    </Brand>
    <MainNav>
      {['HOME', 'LEARNING LABS', 'WORKSPACE', 'DATASOURCE', 'TOOLS & MICROSERVICES'].map(t => <a key={t} href="#nav">{t}</a>)}
    </MainNav>
    <SearchButton aria-label="Search"><Fa name="search" size={58} /></SearchButton>
    <User href="#admin">
      <svg width="82" height="82" viewBox="0 0 82 82"><circle cx="41" cy="41" r="40" fill="#3596db" stroke="#6fb0de" /><circle cx="41" cy="27" r="10.500" fill="#bdbdbd" /><path d="M22 60q0-20 19-20t19 20q0 5-6 5H28q-6 0-6-5z" fill="#bdbdbd" /></svg>
      <span>admin</span>
    </User>
  </AppHeader>
);

const DataCard = ({ title, file }) => (
  <Card>
    <CardTitle>{title}</CardTitle>
    <CardBody>
      {file && (
        <FileRow>
          <Fa name="file" color="#0f72aa" />
          <a href="#file">{file}</a>
          <IconButton aria-label="View"><Fa name="eye" /></IconButton>
          <IconButton aria-label="Delete"><Fa name="times" /></IconButton>
        </FileRow>
      )}
      <CardFoot $tight={!!file}>
        <Updated>Update: 12/12/2016</Updated>
        <Button $tone="blue">ADD</Button>
      </CardFoot>
    </CardBody>
  </Card>
);

export default function App() {
  return (
    <Screen>
      <GlobalStyle />
      <BrowserChrome />
      <Header />
      <Main>
        <TitleBar>
          <h1>WORKSPACE &gt; Interactively Static (CSV) Data Explore using Zeppelin</h1>
          <Actions><Button>MODIFY</Button><Button $tone="pink">DELETE</Button></Actions>
        </TitleBar>
        <Intro>
          <Description>
            In this lab, we will use a pre-loaded static data and explore data using interactive way using Zeppelin. The data should be residing into Hadoop environment and Zeppelin will interact with the data using Spark by forming RDD on the data set or pre-loaded file
          </Description>
          <Meta>
            <p>Created Time: 2016-11-11 12:34:30</p>
            <p>Modifed Time: 2016-11-11 12:34:30</p>
          </Meta>
          <Fab aria-label="Guide"><Fa name="book" /></Fab>
        </Intro>
        <SectionHead>
          <h2>TOOLS &amp; MICROSERVICES</h2>
          <Actions><Button>ADD</Button><Button>ARRANGE</Button><Button $tone="pink">REMOVE</Button></Actions>
        </SectionHead>
        <Board>
          <Stack>
            <DataCard title="Data Source - File" file="bank-full.csv" />
            <DataCard title="Data Source - Database" />
          </Stack>
          <Card>
            <CardTitle>Analytics</CardTitle>
            <CardBody>
              <Tool>
                <Zeppelin />
                <div>
                  <ToolName>zeppelin</ToolName>
                  <ToolVersion>Latest version v5.0 bate</ToolVersion>
                  <ToolLink href="#more">Learning More</ToolLink>
                </div>
              </Tool>
              <CardFoot>
                <Status>TASK_RUNNING</Status>
                <Button $tone="blue">LAUNCH</Button>
              </CardFoot>
            </CardBody>
          </Card>
        </Board>
      </Main>
      <DockStrip>
        <Dock>
          {APPS.map(([Glyph, running, tip], i) => (
            <DockItem key={i} $running={!!running}>
              <Glyph />
              {tip && <Tooltip role="tooltip">{tip}</Tooltip>}
            </DockItem>
          ))}
          <DockLine />
          {WINDOWS.map((Glyph, i) => <DockItem key={i}><Glyph /></DockItem>)}
        </Dock>
      </DockStrip>
    </Screen>
  );
}
